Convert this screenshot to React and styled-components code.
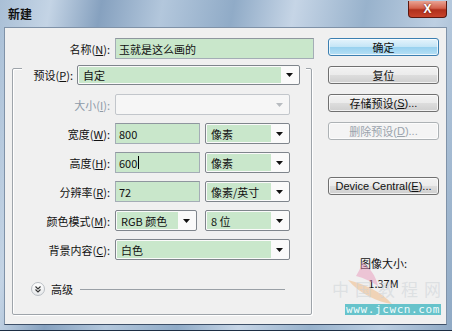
import styled, { createGlobalStyle } from "styled-components";

const Global = createGlobalStyle`
  body {
    margin: 0;
    background: #6f8cab;
    font-family: "Noto Sans CJK SC", "Liberation Sans", sans-serif;
  }
`;

const Window = styled.div`
  position: relative;
  width: 452px;
  height: 331px;
  box-sizing: border-box;
  display: flex;
  flex-direction: column;
  padding: 0 5px 5px 4px;
  overflow: hidden;
  background: linear-gradient(100deg, #a9bfd6 0%, #c4d4e5 10%, #86a1bf 20%, #b3c7dc 32%, #90abc7 46%, #c6d5e6 58%, #98b2cc 72%, #bdcfe2 86%, #8fa9c4 100%);
  border-bottom: 1px solid #1d2e44;
`;

const TitleBar = styled.div`
  height: 27px;
  flex: none;
  display: flex;
  align-items: center;
  justify-content: space-between;
  padding-left: 4px;
  font-size: 12px;
  font-weight: bold;
  color: #111;
`;

const CloseBtn = styled.div`
  align-self: flex-start;
  margin-top: 1px;
  width: 37px;
  height: 16px;
  border: 1px solid #5a1810;
  border-top: none;
  border-radius: 0 0 4px 4px;
  background: linear-gradient(#e9a394 0%, #d4624c 45%, #b0301c 55%, #c8442c 100%);
  display: flex;
  align-items: center;
  justify-content: center;
  color: #fff;
  font: bold 12px "Liberation Sans", sans-serif;
  text-shadow: 0 0 2px #5a1810;
`;

const Client = styled.div`
  flex: 1;
  display: flex;
  background: #f0f0f0;
  border: 1px solid #7f92a8;
  border-bottom-color: #3e5068;
`;

const LeftPane = styled.div`
  width: 315px;
  padding-top: 10px;
`;

const Row = styled.div`
  display: flex;
  align-items: center;
  gap: ${(p) => p.$gap ?? 5}px;
  height: ${(p) => p.$h ?? 21}px;
`;

const Label = styled.span`
  width: ${(p) => p.$w}px;
  margin-right: ${(p) => p.$mr ?? 0}px;
  text-align: right;
  font-size: 11px;
  color: ${(p) => (p.$disabled ? "#8d9aa8" : "#111")};
  white-space: nowrap;
  flex: none;

  u {
    text-underline-offset: 1px;
  }
`;

const TextInput = styled.div`
  width: ${(p) => p.$w}px;
  height: 21px;
  box-sizing: border-box;
  border: 1px solid #a4adb6;
  border-top-color: #8e969e;
  background: #c9e7cb;
  padding: 0 3px;
  display: flex;
  align-items: center;
  font-size: 11px;
  color: #111;
`;

const Caret = styled.span`
  display: inline-block;
  width: 1px;
  height: 13px;
  background: #000;
  margin-left: 1px;
`;

const SelectBox = styled.div`
  width: ${(p) => p.$w}px;
  height: ${(p) => p.$h ?? 21}px;
  box-sizing: border-box;
  border: 1px solid ${(p) => (p.$disabled ? "#c2c6cb" : "#7f858c")};
  border-radius: 2px;
  background: ${(p) => (p.$disabled ? "#f6f6f6" : "#fafafa")};
  padding: 1px;
  display: flex;
  font-size: 11px;
  color: #111;
`;

const SelectValue = styled.div`
  flex: 1;
  background: ${(p) => (p.$disabled ? "transparent" : "#c9e7cb")};
  display: flex;
  align-items: center;
  padding-left: 4px;
`;

const Arrow = styled.div`
  width: 17px;
  display: flex;
  align-items: center;
  justify-content: center;
`;

const GroupBox = styled.div`
  margin: 9px 0 0 7px;
  width: 300px;
  height: 247px;
  box-sizing: border-box;
  border: 1px solid #9ea4aa;
  box-shadow: inset 1px 1px 0 #fff, 1px 1px 0 #fff;
  border-radius: 2px;
  display: flex;
  flex-direction: column;
  gap: 8px;
`;

const GroupHeader = styled.div`
  margin: -4px 0 1px 9px;
  width: 284px;
  box-sizing: border-box;
  padding: 0 6px 0 11px;
  background: #f0f0f0;
  display: flex;
  align-items: center;
  gap: 4px;
`;

const AdvancedRow = styled.div`
  display: flex;
  align-items: center;
  margin: 13px 0 0 18px;
  font-size: 11px;
  color: #111;
`;

const ExpandIcon = styled.div`
  width: 12px;
  height: 12px;
  border-radius: 50%;
  border: 1px solid #b9bec4;
  background: linear-gradient(#ffffff, #e6e8ea);
  display: flex;
  align-items: center;
  justify-content: center;
  margin-right: 6px;
`;

const Rule = styled.div`
  margin-left: 7px;
  width: 205px;
  height: 1px;
  background: #9aa0a6;
`;

const RightPane = styled.div`
  margin-left: 8px;
  padding-top: 10px;
  width: 111px;
  display: flex;
  flex-direction: column;
  gap: 10px;
`;

const Button = styled.div`
  height: 18px;
  box-sizing: border-box;
  border: 1px solid ${(p) => (p.$primary ? "#3c7fb1" : p.$disabled ? "#adb2b5" : "#707070")};
  border-radius: 3px;
  background: ${(p) =>
    p.$primary
      ? "linear-gradient(#e5f4fc 0%, #c4e5f6 50%, #98d1ef 51%, #b6e0f5 100%)"
      : p.$disabled
      ? "#f4f4f4"
      : "linear-gradient(#f2f2f2 0%, #ebebeb 50%, #dddddd 51%, #cfcfcf 100%)"};
  box-shadow: inset 0 0 0 1px rgba(255, 255, 255, 0.7);
  display: flex;
  align-items: center;
  justify-content: center;
  font-size: 11px;
  color: ${(p) => (p.$disabled ? "#9aa3ac" : "#111")};
  margin-top: ${(p) => p.$push ?? 0}px;
  white-space: nowrap;
  font-family: "Liberation Sans", "Noto Sans CJK SC", sans-serif;
`;

const SizeInfo = styled.div`
  margin-top: 50px;
  display: flex;
  flex-direction: column;
  align-items: center;
  gap: 4px;
  font-size: 11px;
  color: #111;
`;

const Watermark = styled.div`
  position: absolute;
  right: 11px;
  bottom: 15px;
  display: flex;
  flex-direction: column;
  align-items: flex-end;
  gap: 3px;
  pointer-events: none;
`;

const WatermarkTitle = styled.div`
  font-size: 17px;
  letter-spacing: 6px;
  color: rgba(205, 210, 215, 0.55);
  margin-right: -6px;
`;

const WatermarkUrl = styled.div`
  background: #67c3cb;
  color: #eefbfc;
  font: 11px "DejaVu Sans Mono", monospace;
  letter-spacing: 0.6px;
  line-height: 11px;
  padding: 0 1px;
`;

const Blot = styled.svg`
  position: absolute;
  right: 40px;
  bottom: 22px;
  opacity: 0.45;
`;

function DownArrow({ disabled }) {
  return (
    <svg width="7" height="4" viewBox="0 0 7 4">
      <path d="M0 0H7L3.5 4Z" fill={disabled ? "#b8bcc0" : "#111"} />
    </svg>
  );
}

function Select({ w, h, disabled, children }) {
  return (
    <SelectBox $w={w} $h={h} $disabled={disabled}>
      <SelectValue $disabled={disabled}>{children}</SelectValue>
      <Arrow>
        <DownArrow disabled={disabled} />
      </Arrow>
    </SelectBox>
  );
}

const fields = [
  { label: "宽度", key: "W", value: "800", unit: "像素" },
  { label: "高度", key: "H", value: "600", unit: "像素", caret: true },
  { label: "分辨率", key: "R", value: "72", unit: "像素/英寸" },
];

export default function App() {
  return (
    <>
      <Global />
      <Window>
        <TitleBar>
          <span>新建</span>
          <CloseBtn>X</CloseBtn>
        </TitleBar>
        <Client>
          <LeftPane>
            <Row>
              <Label $w={105}>
                名称(<u>N</u>):
              </Label>
              <TextInput $w={199}>玉就是这么画的</TextInput>
            </Row>

            <GroupBox>
              <GroupHeader>
                <Label $w={40}>
                  预设(<u>P</u>):
                </Label>
                <Select w={223} h={20}>
                  自定
                </Select>
              </GroupHeader>

              <Row>
                <Label $w={97} $disabled>
                  大小(<u>I</u>):
                </Label>
                <Select w={175} disabled />
              </Row>

              {fields.map((f) => (
                <Row key={f.key}>
                  <Label $w={97}>
                    {f.label}(<u>{f.key}</u>):
                  </Label>
                  <TextInput $w={85}>
                    {f.value}
                    {f.caret && <Caret />}
                  </TextInput>
                  <Select w={85}>{f.unit}</Select>
                </Row>
              ))}

              <Row $gap={8}>
                <Label $w={97} $mr={-3}>
                  颜色模式(<u>M</u>):
                </Label>
                <Select w={82}>RGB 颜色</Select>
                <Select w={85}>8 位</Select>
              </Row>

              <Row>
                <Label $w={97}>
                  背景内容(<u>C</u>):
                </Label>
                <Select w={175}>白色</Select>
              </Row>

              <AdvancedRow>
                <ExpandIcon>
                  <svg width="6" height="7" viewBox="0 0 6 7">
                    <path d="M0.5 0.5L3 3L5.5 0.5M0.5 3.5L3 6L5.5 3.5" fill="none" stroke="#333" strokeWidth="1.1" />
                  </svg>
                </ExpandIcon>
                高级
                <Rule />
              </AdvancedRow>
            </GroupBox>
          </LeftPane>

          <RightPane>
            <Button $primary>确定</Button>
            <Button>复位</Button>
            <Button>
              存储预设(<u>S</u>)...
            </Button>
            <Button $disabled>
              删除预设(<u>D</u>)...
            </Button>
            <Button $push={27}>
              Device Central(<u>E</u>)...
            </Button>
            <SizeInfo>
              <span>图像大小:</span>
              <span>1.37M</span>
            </SizeInfo>
          </RightPane>
        </Client>

        <Blot width="70" height="50" viewBox="0 0 70 50">
          <path d="M20 4C28 10 34 18 36 28C30 24 22 20 14 18C18 12 19 8 20 4Z" fill="#e98fb6" />
          <path d="M6 22C22 26 40 34 50 46C36 44 18 36 6 22Z" fill="#f2b070" />
        </Blot>
        <Watermark>
          <WatermarkTitle>中国教程网</WatermarkTitle>
          <WatermarkUrl>www.jcwcn.com</WatermarkUrl>
        </Watermark>
      </Window>
    </>
  );
}
